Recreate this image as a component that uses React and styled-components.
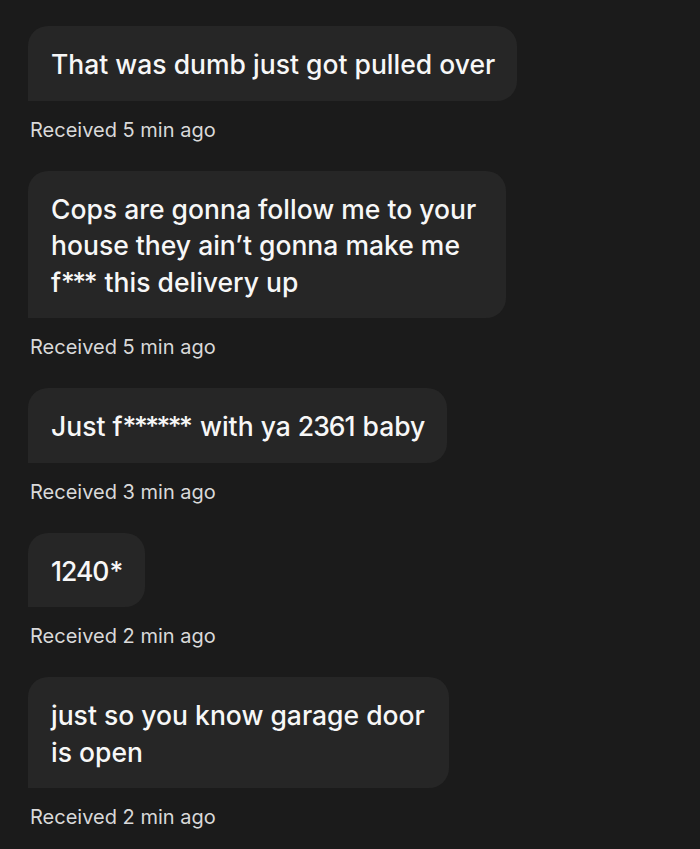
import React from 'react';
import styled, { createGlobalStyle } from 'styled-components';

const GlobalStyle = createGlobalStyle`
    html, body {
        margin: 0;
        padding: 0;
        background-color: #1b1b1b;
    }
    body {
        font-family: Inter, Lato, "Noto Sans", sans-serif;
        -webkit-font-smoothing: antialiased;
    }
`;

// 화면 전체 대화 영역
const Thread = styled.div`
    width: 700px;
    min-height: 849px;
    box-sizing: border-box;
    padding: 26px 28px 0 28px;
    background-color: #1b1b1b;
    display: flex;
    flex-direction: column;
    gap: 29px;
`;

const MessageGroup = styled.div`
    display: flex;
    flex-direction: column;
    align-items: flex-start;
    gap: 17px;
`;

const Bubble = styled.div`
    max-width: ${(p) => p.$maxWidth || 490}px;
    box-sizing: border-box;
    padding: 20px 22px 18px 23px;
    background-color: #262626;
    border-radius: 20px 20px 20px 0;
    color: #f7f7f7;
    font-size: 26.5px;
    font-weight: 450;
    line-height: 36.5px;
`;

// 숫자와 별표는 원본 폰트보다 넓어서 살짝 좁힘
const Tight = styled.span`
    letter-spacing: ${(p) => p.$space}px;
`;

const Caption = styled.div`
    color: #d9d9d9;
    font-size: 20px;
    line-height: 24px;
    padding-left: 2px;
`;

const messages = [
    { text: 'That was dumb just got pulled over', time: '5 min ago' },
    {
        text: 'Cops are gonna follow me to your house they ain\u2019t gonna make me f*** this delivery up',
        time: '5 min ago',
        maxWidth: 478,
    },
    { text: 'Just f****** with ya 2361 baby', time: '3 min ago' },
    { text: '1240*', time: '2 min ago' },
    { text: 'just so you know garage door is open', time: '2 min ago', maxWidth: 421 },
];

const renderText = (text) =>
    text.split(/(\*+|[0-9]+)/).map((part, i) => {
        if (!/^(\*+|[0-9]+)$/.test(part)) return part;
        const space = part[0] === '*' ? -2.5 : -1;
        return (
            <React.Fragment key={i}>
                <Tight $space={space}>{part.slice(0, -1)}</Tight>
                {part.slice(-1)}
            </React.Fragment>
        );
    });

const App = () => {
    return (
        <>
            <GlobalStyle />
            <Thread>
                {messages.map((m, i) => (
                    <MessageGroup key={i}>
                        <Bubble $maxWidth={m.maxWidth}>{renderText(m.text)}</Bubble>
                        <Caption>Received {m.time}</Caption>
                    </MessageGroup>
                ))}
            </Thread>
        </>
    );
};

export default App;
